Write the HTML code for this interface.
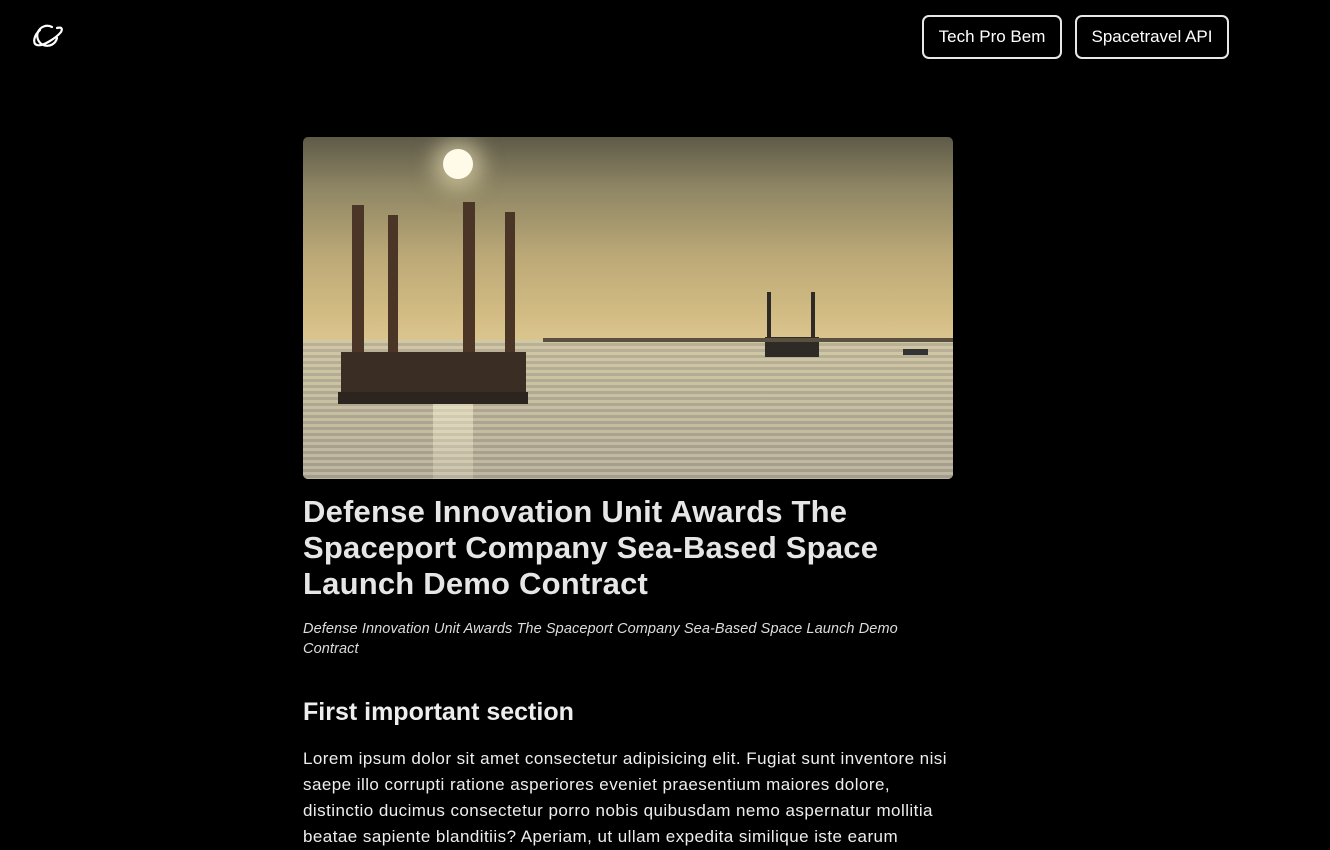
<!DOCTYPE html>
<html><head><style>
body{margin:0;background:#000;width:1330px;height:850px;overflow:hidden;font-family:"Liberation Sans",sans-serif;color:#fff}
.btn{position:absolute;top:15px;height:40px;border:2px solid #e8e8e8;border-radius:7px;font-size:17px;line-height:40px;text-align:center;box-sizing:content-box}
.img{position:absolute;left:303px;top:137px;width:650px;height:342px;border-radius:5px;overflow:hidden;
background:linear-gradient(180deg,#5e5a48 0%,#8e8664 15%,#bca977 35%,#d3bc84 52%,#dcc690 60%)}
h1{position:absolute;left:303px;top:494px;margin:0;width:640px;font-size:31px;line-height:36px;font-weight:bold;color:#e6e6e6;letter-spacing:.2px}
.sub{position:absolute;left:303px;top:619px;width:640px;font-size:14.5px;line-height:20px;font-style:italic;color:#ddd;letter-spacing:.1px}
h2{position:absolute;left:303px;top:698px;margin:0;font-size:25px;font-weight:bold;color:#eee}
p{position:absolute;left:303px;top:746px;margin:0;width:655px;font-size:17px;line-height:26px;color:#eee;letter-spacing:.45px}
</style></head><body>
<svg style="position:absolute;left:30px;top:22px" width="36" height="30" viewBox="0 0 36 30" fill="none" stroke="#fff" stroke-width="2.2" stroke-linecap="round">
<path d="M22 5 A10 10 0 1 0 27 16"/><path d="M10 8 C4 13 2 22 7 23 C13 25 27 15 31 10 C33 6 31 5 27 6"/></svg>
<div class="btn" style="left:922px;width:136px">Tech Pro Bem</div>
<div class="btn" style="left:1075px;width:150px">Spacetravel API</div>
<div class="img">
<div style="position:absolute;left:140px;top:12px;width:30px;height:30px;border-radius:50%;background:#fffbe8;box-shadow:0 0 20px 10px rgba(255,245,200,.5)"></div>
<div style="position:absolute;left:0;top:203px;width:650px;height:139px;background:repeating-linear-gradient(180deg,#d0c7a8 0,#d0c7a8 3px,#a9a190 3px,#a9a190 6px)"></div>
<div style="position:absolute;left:0;top:203px;width:650px;height:139px;background:linear-gradient(180deg,rgba(210,200,160,.4),rgba(150,145,135,.3))"></div>
<div style="position:absolute;left:130px;top:260px;width:40px;height:82px;background:linear-gradient(180deg,rgba(255,250,220,.5),rgba(255,250,220,.2))"></div>
<div style="position:absolute;left:49px;top:68px;width:12px;height:150px;background:#4a3526"></div>
<div style="position:absolute;left:85px;top:78px;width:10px;height:140px;background:#4a3526"></div>
<div style="position:absolute;left:160px;top:65px;width:12px;height:150px;background:#4a3526"></div>
<div style="position:absolute;left:202px;top:75px;width:10px;height:140px;background:#4a3526"></div>
<div style="position:absolute;left:38px;top:215px;width:185px;height:45px;background:#3a2e24"></div>
<div style="position:absolute;left:35px;top:255px;width:190px;height:12px;background:#2c241e"></div>
<div style="position:absolute;left:464px;top:155px;width:4px;height:60px;background:#2e2a25"></div>
<div style="position:absolute;left:508px;top:155px;width:4px;height:60px;background:#2e2a25"></div>
<div style="position:absolute;left:462px;top:200px;width:54px;height:20px;background:#2e2a25"></div>
<div style="position:absolute;left:240px;top:201px;width:410px;height:4px;background:#5a5040"></div>
<div style="position:absolute;left:600px;top:212px;width:25px;height:6px;background:#333"></div>
</div>
<h1>Defense Innovation Unit Awards The Spaceport Company Sea-Based Space Launch Demo Contract</h1>
<div class="sub">Defense Innovation Unit Awards The Spaceport Company Sea-Based Space Launch Demo Contract</div>
<h2>First important section</h2>
<p>Lorem ipsum dolor sit amet consectetur adipisicing elit. Fugiat sunt inventore nisi saepe illo corrupti ratione asperiores eveniet praesentium maiores dolore, distinctio ducimus consectetur porro nobis quibusdam nemo aspernatur mollitia beatae sapiente blanditiis? Aperiam, ut ullam expedita similique iste earum</p>
</body></html>
